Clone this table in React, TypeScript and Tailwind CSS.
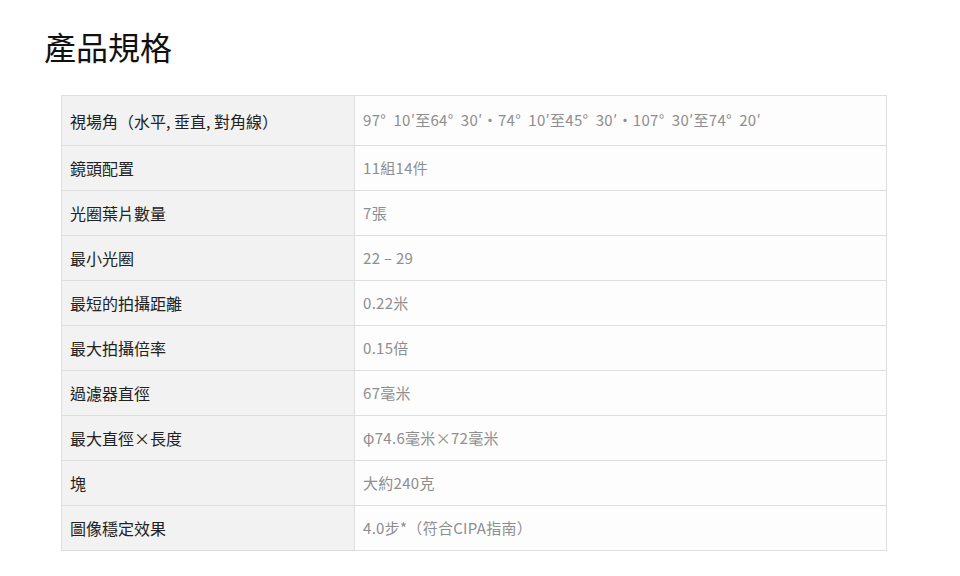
import React from 'react';

const specs: [string, string][] = [
  ['視場角（水平, 垂直, 對角線）', '97°  10′至64°  30′‧74°  10′至45°  30′‧107°  30′至74°  20′'],
  ['鏡頭配置', '11組14件'],
  ['光圈葉片數量', '7張'],
  ['最小光圈', '22 – 29'],
  ['最短的拍攝距離', '0.22米'],
  ['最大拍攝倍率', '0.15倍'],
  ['過濾器直徑', '67毫米'],
  ['最大直徑×長度', 'φ74.6毫米×72毫米'],
  ['塊', '大約240克'],
  ['圖像穩定效果', '4.0步*（符合CIPA指南）'],
];

export default function App() {
  return (
    <div
      className="w-[960px] h-[576px] bg-white overflow-hidden"
      style={{ fontFamily: '"Noto Sans CJK TC", "Noto Sans", sans-serif' }}
    >
      <h1 className="pl-[44px] pt-[26px] text-[32px] leading-[40px] text-[#111] font-normal">產品規格</h1>

      <div className="ml-[61px] mt-[29px] w-[826px] border border-[#dedede]">
        {specs.map(([label, value], i) => (
          <div
            key={label}
            className={`flex ${i === 0 ? 'h-[49px]' : 'h-[45px] border-t border-[#dedede]'}`}
          >
            <div className="w-[293px] shrink-0 bg-[#f2f2f2] border-r border-[#dedede] flex items-center pl-[8px] text-[16px] text-[#222]">
              {label}
            </div>
            <div className="flex-1 bg-[#fdfdfd] flex items-center pl-[8px] text-[15px] tracking-[0.3px] text-[#8e8e8e] whitespace-pre">
              {value}
            </div>
          </div>
        ))}
      </div>
    </div>
  );
}
